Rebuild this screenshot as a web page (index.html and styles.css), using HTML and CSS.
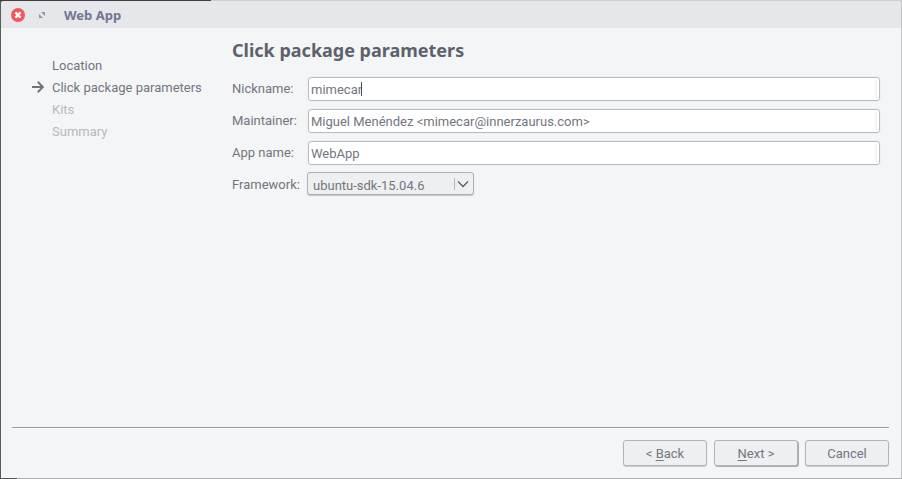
FILE: index.html
```html
<!DOCTYPE html>
<html lang="en">
<head>
<meta charset="utf-8">
<title>Web App</title>
<link rel="stylesheet" href="styles.css">
</head>
<body>
<div class="desktop">
<div class="window">
  <header class="titlebar">
    <button class="tool" type="button" aria-label="Close">
      <svg width="14" height="14" viewBox="0 0 14 14"><circle cx="7" cy="7" r="7" fill="#f4565d"/><path d="M4.4 4.4l5.2 5.2M9.6 4.4L4.4 9.6" stroke="#fff" stroke-width="2.2"/></svg>
    </button>
    <button class="tool" type="button" aria-label="Maximize">
      <svg width="14" height="14" viewBox="0 0 14 14"><path d="M6 4h4v4zM4 6v4h4z" fill="#9295a0"/></svg>
    </button>
    <span class="caption">Web App</span>
  </header>
  <main class="content">
    <nav>
      <ol class="steps">
        <li class="step">Location</li>
        <li class="step" aria-current="step"><svg class="arrow" width="12" height="12" viewBox="0 0 12 12"><path d="M0 6h11M5.7 0.8L11 6l-5.3 5.2" fill="none" stroke="#737373" stroke-width="1.9"/></svg>Click package parameters</li>
        <li class="step pending">Kits</li>
        <li class="step pending">Summary</li>
      </ol>
    </nav>
    <form>
      <h1>Click package parameters</h1>
      <div class="fields">
        <label for="nickname">Nickname:</label>
        <div class="field focused"><input id="nickname" type="text" value="mimecar"></div>
        <label for="maintainer">Maintainer:</label>
        <div class="field"><input id="maintainer" type="text" value="Miguel Menéndez &lt;mimecar@innerzaurus.com&gt;"></div>
        <label for="appname">App name:</label>
        <div class="field"><input id="appname" type="text" value="WebApp"></div>
        <label for="framework">Framework:</label>
        <div class="choice">
          <select id="framework"><option>ubuntu-sdk-15.04.6</option></select>
          <svg class="chevron" width="18" height="14" viewBox="0 0 18 14"><path d="M.5 1v12" stroke="#b4b6b9"/><path d="M4 4.5l5 5 5-5" fill="none" stroke="#5c616c" stroke-width="1.4"/></svg>
        </div>
      </div>
    </form>
  </main>
  <footer class="actions">
    <button class="button" type="button">&lt; <u>B</u>ack</button>
    <button class="button default" type="button"><u>N</u>ext &gt;</button>
    <button class="button" type="button">Cancel</button>
  </footer>
</div>
</div>
</body>
</html>
```
FILE: styles.css
```css
* { box-sizing: border-box; }
body {
  margin: 0;
  font: 13px/22px Roboto, "Open Sans", sans-serif;
  color: #72767f;
}
.desktop {
  min-height: 100vh;
  display: flex;
  padding: 1px;
  background:
    linear-gradient(90deg, #3f3d40 211px, #cfcfcf 211px) top / 100% 1px no-repeat,
    linear-gradient(90deg, #555 17px, #adafb2 17px) bottom / 100% 1px no-repeat,
    linear-gradient(90deg, #5c5b5e 50%, #c4c5c7 50%);
}
.window {
  flex: 1;
  display: flex;
  flex-direction: column;
  background: #f4f5f7;
  border-radius: 3px 3px 0 0;
  overflow: hidden;
}
.titlebar {
  height: 27px;
  flex: none;
  display: flex;
  align-items: center;
  gap: 10px;
  padding-left: 10px;
  background: #e6e7eb;
}
.tool {
  width: 14px;
  height: 14px;
  padding: 0;
  border: 0;
  background: none;
}
.tool svg { display: block; }
.caption {
  margin-left: 5px;
  font-family: "Noto Sans", sans-serif;
  font-weight: bold;
  color: #707691;
}
.content {
  flex: 1;
  display: grid;
  grid-template-columns: 231px 1fr;
  padding: 10px 21px 0 0;
}
.steps {
  list-style: none;
  margin: 0;
  padding: 17px 0 0 51px;
}
.step { position: relative; white-space: nowrap; }
.pending { color: #b7b9bd; }
.arrow { position: absolute; left: -20px; top: 4px; }
h1 {
  margin: 0 0 15px;
  font: bold 18px/24px "Noto Sans", sans-serif;
  color: #5c616c;
}
.fields {
  display: grid;
  grid-template-columns: 75px 1fr;
  row-gap: 8px;
}
label { line-height: 24px; }
.field { position: relative; height: 24px; margin-left: 1px; }
.field input {
  display: block;
  width: 100%;
  height: 24px;
  padding: 0 2px;
  border: 1px solid #b9bcc2;
  border-radius: 3px;
  background: linear-gradient(#f4f5f7, #f4f5f7) right 2px center / 2px 18px no-repeat #fff;
  box-shadow: 0 0 0 1px #eeeff1;
  font: inherit;
  color: inherit;
  outline: 0;
}
.focused::after {
  content: "";
  position: absolute;
  left: 53px;
  top: 5px;
  width: 1px;
  height: 14px;
  background: #4b4f59;
}
.choice { position: relative; justify-self: start; margin-top: -1px; }
select {
  appearance: none;
  display: block;
  width: 167px;
  height: 23px;
  padding: 2px 24px 0 5px;
  border: 1px solid #aeb0b3;
  border-radius: 3px;
  background: #eeeff1;
  box-shadow: 0 1px 1px #c4c5c8;
  font: inherit;
  color: inherit;
}
.chevron {
  position: absolute;
  right: 2px;
  top: 5px;
  pointer-events: none;
}
.actions {
  display: flex;
  justify-content: flex-end;
  gap: 7px;
  margin: 0 12px 0 11px;
  padding: 12px 0;
  border-top: 1px solid #999b9f;
  box-shadow: inset 0 1px #fff;
}
.button {
  width: 84px;
  height: 26px;
  padding: 2px 0 0;
  border: 1px solid #b2b4b7;
  border-radius: 3px;
  background: #eeeff1;
  box-shadow: 0 1px 1px #c8c9cb;
  font: inherit;
  color: inherit;
}
.default { box-shadow: 1px 1px #aaacaf; }
u { text-underline-offset: 2px; }
```
